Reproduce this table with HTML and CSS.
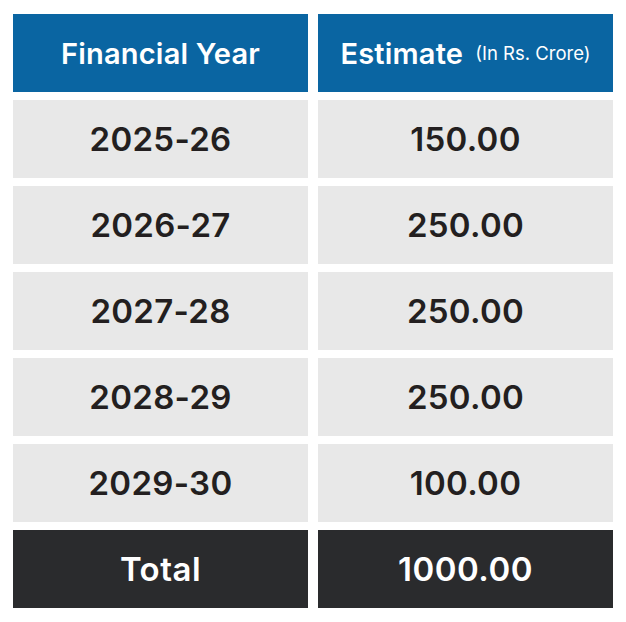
FILE: index.html
```html
<!DOCTYPE html>
<html>
<head>
<meta charset="utf-8">
<link rel="stylesheet" href="styles.css">
</head>
<body>
<div class="table">
  <div class="cell head">Financial Year</div>
  <div class="cell head">Estimate <span class="unit">(In Rs. Crore)</span></div>
  <div class="cell">2025-26</div>
  <div class="cell">150.00</div>
  <div class="cell">2026-27</div>
  <div class="cell">250.00</div>
  <div class="cell">2027-28</div>
  <div class="cell">250.00</div>
  <div class="cell">2028-29</div>
  <div class="cell">250.00</div>
  <div class="cell">2029-30</div>
  <div class="cell">100.00</div>
  <div class="cell total">Total</div>
  <div class="cell total">1000.00</div>
</div>
</body>
</html>
```
FILE: styles.css
```css
html, body {
  margin: 0;
  padding: 0;
  background: #ffffff;
}
body {
  padding: 14px 13px;
  font-family: Inter, "Liberation Sans", sans-serif;
}
.table {
  display: grid;
  grid-template-columns: 295px 295px;
  grid-auto-rows: 78px;
  column-gap: 10px;
  row-gap: 8px;
}
.cell {
  display: flex;
  align-items: center;
  justify-content: center;
  background: #e8e8e8;
  color: #231f20;
  font-size: 33px;
  font-weight: 600;
  letter-spacing: 0.3px;
}
.head {
  background: #0a65a2;
  color: #ffffff;
  font-size: 29px;
  font-weight: 600;
  letter-spacing: 0.2px;
}
.unit {
  font-size: 18.5px;
  font-weight: 400;
  letter-spacing: 0;
  margin-left: 12px;
}
.total {
  background: #2a2b2d;
  color: #ffffff;
  letter-spacing: 0.5px;
}
```
